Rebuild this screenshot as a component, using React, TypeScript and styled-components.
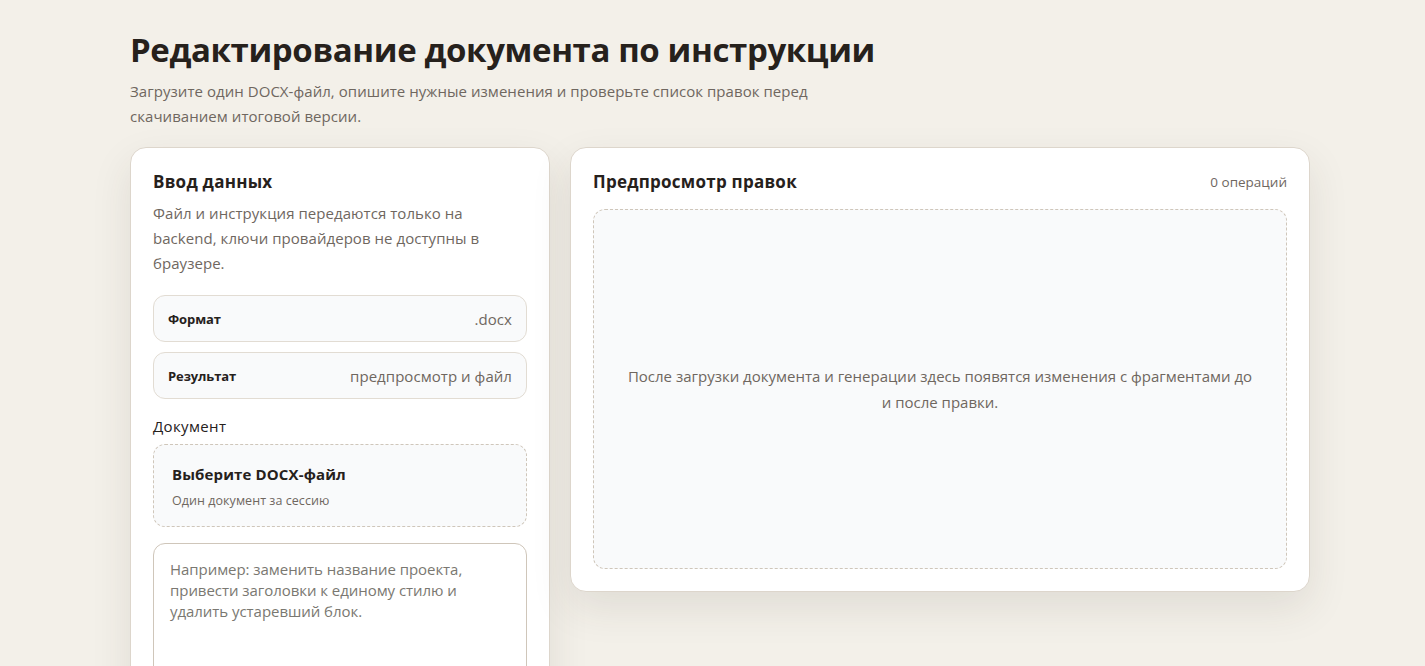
import React from 'react';
import styled, { createGlobalStyle } from 'styled-components';

const GlobalStyle = createGlobalStyle`
  html, body {
    margin: 0;
    padding: 0;
    background: #f3f0e9;
    color: #26211c;
    font-family: "Open Sans", "Noto Sans", "Liberation Sans", sans-serif;
  }
  * {
    box-sizing: border-box;
  }
`;

const Page = styled.div`
  padding: 25px 115px 32px 130px;
`;

const Header = styled.header`
  margin-bottom: 18px;
`;

const Title = styled.h1`
  margin: 0 0 4px;
  font-size: 33px;
  line-height: 50px;
  font-weight: 700;
  letter-spacing: -0.38px;
`;

const Subtitle = styled.p`
  margin: 0;
  max-width: 720px;
  font-size: 15px;
  line-height: 25px;
  color: #6f675f;
  letter-spacing: 0.05px;
`;

const Columns = styled.div`
  display: grid;
  grid-template-columns: 420px 1fr;
  gap: 20px;
  align-items: start;
`;

const Panel = styled.section`
  display: flex;
  flex-direction: column;
  padding: 22px;
  background: #ffffff;
  border: 1px solid #ddd6cc;
  border-radius: 16px;
  box-shadow: 0 16px 40px rgba(60, 50, 35, 0.1);
`;

const PanelTitle = styled.h2`
  margin: 0;
  font-size: 17px;
  line-height: 24px;
  font-weight: 700;
  letter-spacing: 0.25px;
`;

const PanelText = styled.p`
  max-width: 350px;
  margin: 7px 0 19.75px;
  font-size: 15px;
  line-height: 24.75px;
  color: #6f675f;
  letter-spacing: 0.05px;
`;

const InfoList = styled.div`
  display: flex;
  flex-direction: column;
  gap: 10px;
  margin-bottom: 17px;
`;

const InfoRow = styled.div`
  display: flex;
  align-items: center;
  justify-content: space-between;
  height: 47px;
  padding: 0 14px;
  background: #f9fafb;
  border: 1px solid #e2dcd3;
  border-radius: 12px;
`;

const InfoLabel = styled.span`
  font-size: 13px;
  font-weight: 700;
  letter-spacing: -0.1px;
`;

const InfoValue = styled.span`
  font-size: 15px;
  color: #6f675f;
  letter-spacing: 0.05px;
`;

const FieldLabel = styled.label`
  display: block;
  margin-bottom: 8px;
  font-size: 15px;
  line-height: 20px;
  font-weight: 500;
  letter-spacing: 0.35px;
`;

const DropZone = styled.div`
  display: flex;
  flex-direction: column;
  gap: 8px;
  height: 83px;
  margin-bottom: 16px;
  padding: 18px 18px 0;
  background: #f9fafb;
  border: 1px dashed #cfc6ba;
  border-radius: 12px;
`;

const DropTitle = styled.strong`
  font-size: 15px;
  line-height: 22px;
  font-weight: 700;
  letter-spacing: 0.13px;
`;

const DropHint = styled.span`
  font-size: 12.5px;
  line-height: 16px;
  color: #6f675f;
  letter-spacing: 0.05px;
`;

const Instruction = styled.textarea`
  display: block;
  width: 100%;
  height: 220px;
  padding: 15px 16px;
  background: #ffffff;
  border: 1px solid #cfc6ba;
  border-radius: 12px;
  font-family: inherit;
  font-size: 15px;
  line-height: 21px;
  letter-spacing: -0.05px;
  color: #26211c;
  resize: none;
  outline: none;

  &::placeholder {
    color: #7a7871;
    opacity: 1;
  }
`;

const PreviewHeader = styled.div`
  display: flex;
  align-items: center;
  justify-content: space-between;
  margin-bottom: 15px;
`;

const OperationCount = styled.span`
  font-size: 13.5px;
  color: #6f675f;
`;

const EmptyPreview = styled.div`
  display: flex;
  align-items: center;
  justify-content: center;
  height: 360px;
  padding: 0 32px;
  background: #f9fafb;
  border: 1px dashed #cfc6ba;
  border-radius: 12px;
  font-size: 15px;
  line-height: 26px;
  color: #6f675f;
  text-align: center;
`;

const App: React.FC = () => {
  return (
    <Page>
      <GlobalStyle />
      <Header>
        <Title>Редактирование документа по инструкции</Title>
        <Subtitle>
          Загрузите один DOCX-файл, опишите нужные изменения и проверьте список правок перед
          скачиванием итоговой версии.
        </Subtitle>
      </Header>

      <Columns>
        <Panel>
          <PanelTitle>Ввод данных</PanelTitle>
          <PanelText>
            Файл и инструкция передаются только на backend, ключи провайдеров не доступны в
            браузере.
          </PanelText>
          <InfoList>
            <InfoRow>
              <InfoLabel>Формат</InfoLabel>
              <InfoValue>.docx</InfoValue>
            </InfoRow>
            <InfoRow>
              <InfoLabel>Результат</InfoLabel>
              <InfoValue>предпросмотр и файл</InfoValue>
            </InfoRow>
          </InfoList>
          <FieldLabel>Документ</FieldLabel>
          <DropZone>
            <DropTitle>Выберите DOCX-файл</DropTitle>
            <DropHint>Один документ за сессию</DropHint>
          </DropZone>
          <Instruction placeholder="Например: заменить название проекта, привести заголовки к единому стилю и удалить устаревший блок." />
        </Panel>

        <Panel>
          <PreviewHeader>
            <PanelTitle>Предпросмотр правок</PanelTitle>
            <OperationCount>0 операций</OperationCount>
          </PreviewHeader>
          <EmptyPreview>
            После загрузки документа и генерации здесь появятся изменения с фрагментами до и после правки.
          </EmptyPreview>
        </Panel>
      </Columns>
    </Page>
  );
};

export default App;
